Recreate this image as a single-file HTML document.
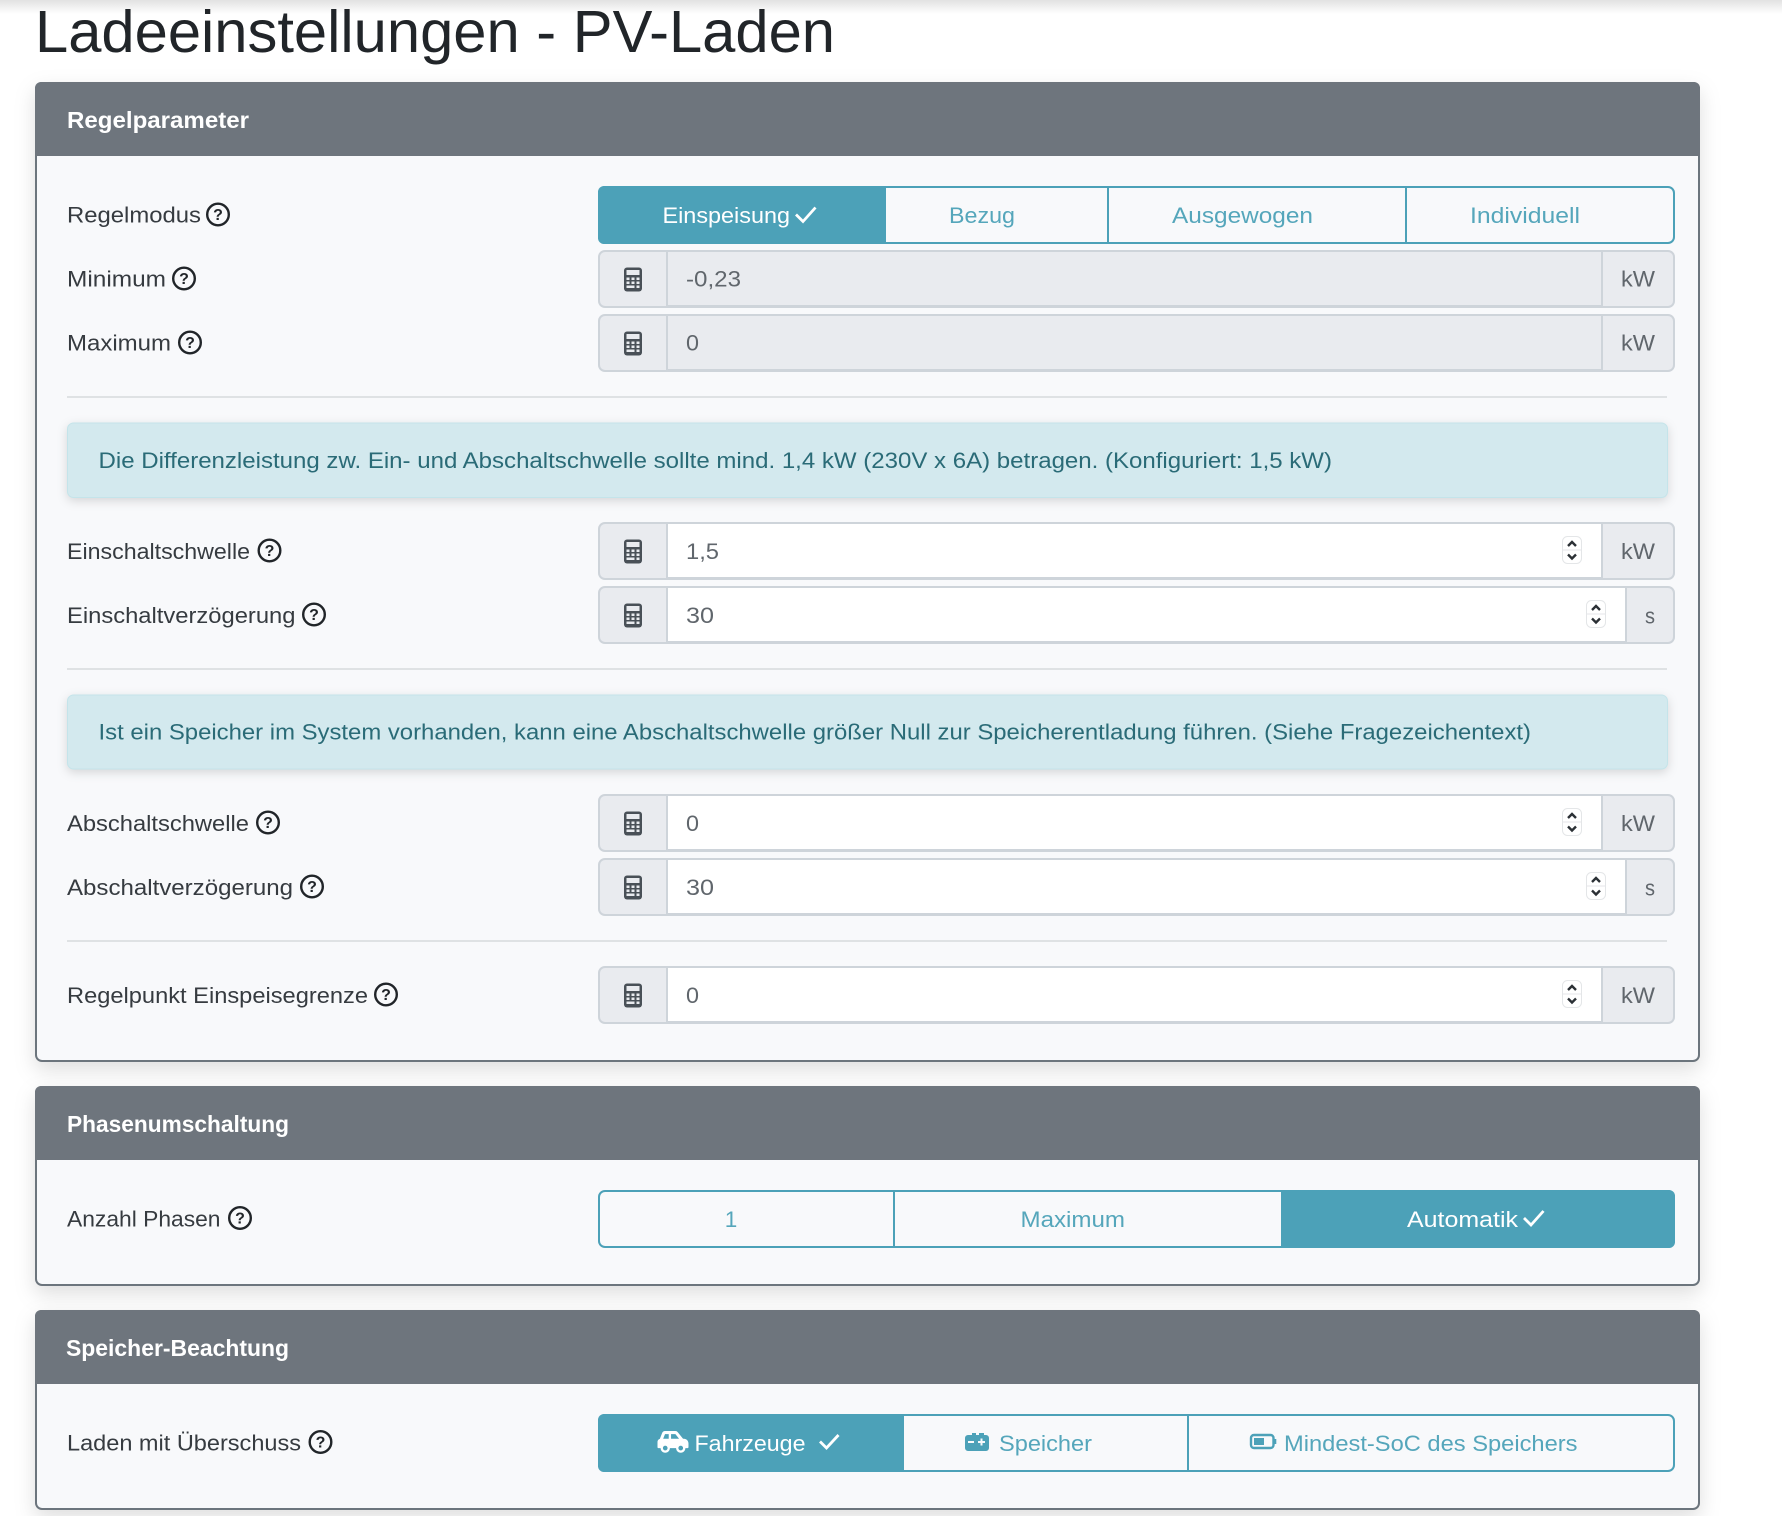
<!DOCTYPE html>
<html lang="de"><head><meta charset="utf-8"><title>Ladeeinstellungen - PV-Laden</title>
<style>
html,body{margin:0;padding:0;background:#fff;width:1782px;height:1516px;overflow:hidden}
svg{display:block}
text{font-family:"Liberation Sans",sans-serif;font-size:22.5px}
.l{fill:#363b40}.v{fill:#60666c}.t{fill:#55a6bb}.w{fill:#fff}
.h{fill:#fff;font-weight:bold;font-size:23px}
.a{fill:#2a6b77}
.q circle{fill:none;stroke:#212529;stroke-width:2.4}
.q text{font-size:16px;font-weight:bold;fill:#212529;text-anchor:middle}
.card{filter:drop-shadow(0 8px 10px rgba(0,0,0,.13))}
.al{filter:drop-shadow(0 3px 5px rgba(0,0,0,.14))}
</style></head><body>
<svg width="1782" height="1516" viewBox="0 0 1782 1516" xmlns="http://www.w3.org/2000/svg">
<defs>
<linearGradient id="top" x1="0" y1="0" x2="0" y2="1"><stop offset="0" stop-color="#e2e2e2"/><stop offset="1" stop-color="#fff"/></linearGradient>
<g id="calc" transform="translate(-.5,-.5)">
<rect x="624.5" y="18" width="18" height="24" rx="3" fill="#495057"/>
<rect x="627" y="20.5" width="13" height="5" fill="#e9ebef"/>
<g fill="#e9ebef"><rect x="627" y="28" width="3" height="2.5"/><rect x="632" y="28" width="3" height="2.5"/><rect x="637" y="28" width="3" height="2.5"/><rect x="627" y="32" width="3" height="2.5"/><rect x="632" y="32" width="3" height="2.5"/><rect x="637" y="32" width="3" height="2.5"/><rect x="627" y="36" width="8" height="2.5"/><rect x="637" y="36" width="3" height="2.5"/></g>
</g>
<g id="spin">
<rect x="0" y="0" width="19" height="27" rx="5" fill="#fff" stroke="#e4e6e8"/>
<line x1="0" y1="13.5" x2="19" y2="13.5" stroke="#e4e6e8"/>
<path d="M5.5 9.5 9.5 5.5 13.5 9.5M5.500 18 9.500 22 13.500 18" fill="none" stroke="#2b3035" stroke-width="2.400"/>
</g>
</defs>
<rect width="1782" height="14" fill="url(#top)"/>
<text x="35" y="52" style="font-size:59.5px" fill="#212529" textLength="800" lengthAdjust="spacingAndGlyphs">Ladeeinstellungen - PV-Laden</text>

<!-- Card 1 -->
<g class="card"><rect x="36" y="83" width="1663" height="978" rx="6" fill="#f8f9fb" stroke="#6c757d" stroke-width="2"/></g>
<path d="M35 156V88a6 6 0 0 1 6-6H1694a6 6 0 0 1 6 6V156Z" fill="#6e757d"/>
<text class="h" x="67" y="128" textLength="182" lengthAdjust="spacingAndGlyphs">Regelparameter</text>

<!-- Regelmodus -->
<g transform="translate(0,186)">
<text class="l" x="67" y="36.5" textLength="134" lengthAdjust="spacingAndGlyphs">Regelmodus</text>
<g class="q" transform="translate(218,28.5)"><circle r="10.8"/><text y="5.6">?</text></g>
<rect x="599" y="1" width="1075" height="56" rx="6" fill="#f8f9fb" stroke="#4ca1b8" stroke-width="2"/>
<path d="M886 0H604a6 6 0 0 0-6 6V52a6 6 0 0 0 6 6H886Z" fill="#4ca1b8"/>
<path d="M1108 0V58M1406 0V58" stroke="#4ca1b8" stroke-width="2"/>
<text class="w" x="662.5" y="37" textLength="127.5" lengthAdjust="spacingAndGlyphs">Einspeisung</text>
<path d="M796 28.5 803 35.5 815.5 21.5" fill="none" stroke="#fff" stroke-width="2.8"/>
<text class="t" x="949" y="37" textLength="66" lengthAdjust="spacingAndGlyphs">Bezug</text>
<text class="t" x="1172" y="37" textLength="141" lengthAdjust="spacingAndGlyphs">Ausgewogen</text>
<text class="t" x="1470" y="37" textLength="110" lengthAdjust="spacingAndGlyphs">Individuell</text>
</g>

<!-- Minimum -->
<g transform="translate(0,250)">
<text class="l" x="67" y="36.5" textLength="99" lengthAdjust="spacingAndGlyphs">Minimum</text>
<g class="q" transform="translate(184,28.5)"><circle r="10.8"/><text y="5.6">?</text></g>
<rect x="599" y="1" width="1075" height="56" rx="6" fill="#e9ebef" stroke="#ced4da" stroke-width="2"/>
<rect x="667" y="1" width="935" height="55" fill="#e9ebef" stroke="#ced4da" stroke-width="2"/>
<use href="#calc"/>
<text class="v" x="686" y="36.5" textLength="55" lengthAdjust="spacingAndGlyphs">-0,23</text>
<text class="v" x="1621" y="36.5" textLength="34" lengthAdjust="spacingAndGlyphs">kW</text>
</g>

<!-- Maximum -->
<g transform="translate(0,314)">
<text class="l" x="67" y="36.5" textLength="104" lengthAdjust="spacingAndGlyphs">Maximum</text>
<g class="q" transform="translate(190,28.5)"><circle r="10.8"/><text y="5.6">?</text></g>
<rect x="599" y="1" width="1075" height="56" rx="6" fill="#e9ebef" stroke="#ced4da" stroke-width="2"/>
<rect x="667" y="1" width="935" height="55" fill="#e9ebef" stroke="#ced4da" stroke-width="2"/>
<use href="#calc"/>
<text class="v" x="686" y="36.5" textLength="13" lengthAdjust="spacingAndGlyphs">0</text>
<text class="v" x="1621" y="36.5" textLength="34" lengthAdjust="spacingAndGlyphs">kW</text>
</g>

<rect x="67" y="396" width="1600" height="2" fill="#dfe2e4"/>
<g class="al"><rect x="67.5" y="423" width="1600" height="74.500" rx="6" fill="#d3e9ee" stroke="#c4e4ea"/></g>
<text class="a" x="98.500" y="468" textLength="1233.500" lengthAdjust="spacingAndGlyphs">Die Differenzleistung zw. Ein- und Abschaltschwelle sollte mind. 1,4 kW (230V x 6A) betragen. (Konfiguriert: 1,5 kW)</text>

<!-- Einschaltschwelle -->
<g transform="translate(0,522)">
<text class="l" x="67" y="37" textLength="183" lengthAdjust="spacingAndGlyphs">Einschaltschwelle</text>
<g class="q" transform="translate(269.500,28.500)"><circle r="10.8"/><text y="5.6">?</text></g>
<rect x="599" y="1" width="1075" height="56" rx="6" fill="#e9ebef" stroke="#ced4da" stroke-width="2"/>
<rect x="667" y="1" width="935" height="55" fill="#fff" stroke="#ced4da" stroke-width="2"/>
<use href="#calc"/>
<text class="v" x="686" y="37" textLength="33" lengthAdjust="spacingAndGlyphs">1,5</text>
<use href="#spin" x="1562.500" y="14.500"/>
<text class="v" x="1621" y="37" textLength="34" lengthAdjust="spacingAndGlyphs">kW</text>
</g>

<!-- Einschaltverzögerung -->
<g transform="translate(0,586)">
<text class="l" x="67" y="37" textLength="228.500" lengthAdjust="spacingAndGlyphs">Einschaltverzögerung</text>
<g class="q" transform="translate(314,28.500)"><circle r="10.8"/><text y="5.6">?</text></g>
<rect x="599" y="1" width="1075" height="56" rx="6" fill="#e9ebef" stroke="#ced4da" stroke-width="2"/>
<rect x="667" y="1" width="959" height="55" fill="#fff" stroke="#ced4da" stroke-width="2"/>
<use href="#calc"/>
<text class="v" x="686" y="37" textLength="28" lengthAdjust="spacingAndGlyphs">30</text>
<use href="#spin" x="1586.500" y="14.500"/>
<text class="v" x="1645" y="37.500" textLength="10" lengthAdjust="spacingAndGlyphs">s</text>
</g>

<rect x="67" y="668" width="1600" height="2" fill="#dfe2e4"/>
<g class="al"><rect x="67.5" y="695" width="1600" height="74" rx="6" fill="#d3e9ee" stroke="#c4e4ea"/></g>
<text class="a" x="98.500" y="739.500" textLength="1432.500" lengthAdjust="spacingAndGlyphs">Ist ein Speicher im System vorhanden, kann eine Abschaltschwelle größer Null zur Speicherentladung führen. (Siehe Fragezeichentext)</text>

<!-- Abschaltschwelle -->
<g transform="translate(0,794)">
<text class="l" x="67" y="37" textLength="182" lengthAdjust="spacingAndGlyphs">Abschaltschwelle</text>
<g class="q" transform="translate(268,28.500)"><circle r="10.8"/><text y="5.6">?</text></g>
<rect x="599" y="1" width="1075" height="56" rx="6" fill="#e9ebef" stroke="#ced4da" stroke-width="2"/>
<rect x="667" y="1" width="935" height="55" fill="#fff" stroke="#ced4da" stroke-width="2"/>
<use href="#calc"/>
<text class="v" x="686" y="37" textLength="13" lengthAdjust="spacingAndGlyphs">0</text>
<use href="#spin" x="1562.500" y="14.500"/>
<text class="v" x="1621" y="37" textLength="34" lengthAdjust="spacingAndGlyphs">kW</text>
</g>

<!-- Abschaltverzögerung -->
<g transform="translate(0,858)">
<text class="l" x="67" y="37" textLength="226" lengthAdjust="spacingAndGlyphs">Abschaltverzögerung</text>
<g class="q" transform="translate(312,28.500)"><circle r="10.8"/><text y="5.6">?</text></g>
<rect x="599" y="1" width="1075" height="56" rx="6" fill="#e9ebef" stroke="#ced4da" stroke-width="2"/>
<rect x="667" y="1" width="959" height="55" fill="#fff" stroke="#ced4da" stroke-width="2"/>
<use href="#calc"/>
<text class="v" x="686" y="37" textLength="28" lengthAdjust="spacingAndGlyphs">30</text>
<use href="#spin" x="1586.500" y="14.500"/>
<text class="v" x="1645" y="37.500" textLength="10" lengthAdjust="spacingAndGlyphs">s</text>
</g>

<rect x="67" y="940" width="1600" height="2" fill="#dfe2e4"/>

<!-- Regelpunkt -->
<g transform="translate(0,966)">
<text class="l" x="67" y="37" textLength="301" lengthAdjust="spacingAndGlyphs">Regelpunkt Einspeisegrenze</text>
<g class="q" transform="translate(386,28.500)"><circle r="10.8"/><text y="5.6">?</text></g>
<rect x="599" y="1" width="1075" height="56" rx="6" fill="#e9ebef" stroke="#ced4da" stroke-width="2"/>
<rect x="667" y="1" width="935" height="55" fill="#fff" stroke="#ced4da" stroke-width="2"/>
<use href="#calc"/>
<text class="v" x="686" y="37" textLength="13" lengthAdjust="spacingAndGlyphs">0</text>
<use href="#spin" x="1562.500" y="14.500"/>
<text class="v" x="1621" y="37" textLength="34" lengthAdjust="spacingAndGlyphs">kW</text>
</g>

<!-- Card 2 -->
<g class="card"><rect x="36" y="1087" width="1663" height="198" rx="6" fill="#f8f9fb" stroke="#6c757d" stroke-width="2"/></g>
<path d="M35 1160V1092a6 6 0 0 1 6-6H1694a6 6 0 0 1 6 6V1160Z" fill="#6e757d"/>
<text class="h" x="67" y="1132" textLength="222" lengthAdjust="spacingAndGlyphs">Phasenumschaltung</text>
<g transform="translate(0,1190)">
<text class="l" x="67" y="36.5" textLength="153.5" lengthAdjust="spacingAndGlyphs">Anzahl Phasen</text>
<g class="q" transform="translate(240,28)"><circle r="10.8"/><text y="5.6">?</text></g>
<rect x="599" y="1" width="1075" height="56" rx="6" fill="#f8f9fb" stroke="#4ca1b8" stroke-width="2"/>
<path d="M1281 0H1669a6 6 0 0 1 6 6V52a6 6 0 0 1-6 6H1281Z" fill="#4ca1b8"/>
<path d="M894 0V58" stroke="#4ca1b8" stroke-width="2"/>
<text class="t" x="731" y="37" text-anchor="middle">1</text>
<text class="t" x="1020.5" y="37" textLength="104.5" lengthAdjust="spacingAndGlyphs">Maximum</text>
<text class="w" x="1407" y="37" textLength="111" lengthAdjust="spacingAndGlyphs">Automatik</text>
<path d="M1524 28 1531 35 1543.5 21" fill="none" stroke="#fff" stroke-width="2.8"/>
</g>

<!-- Card 3 -->
<g class="card"><rect x="36" y="1311" width="1663" height="198" rx="6" fill="#f8f9fb" stroke="#6c757d" stroke-width="2"/></g>
<path d="M35 1384V1316a6 6 0 0 1 6-6H1694a6 6 0 0 1 6 6V1384Z" fill="#6e757d"/>
<text class="h" x="66" y="1356" textLength="223" lengthAdjust="spacingAndGlyphs">Speicher-Beachtung</text>
<g transform="translate(0,1414)">
<text class="l" x="67" y="36.5" textLength="234" lengthAdjust="spacingAndGlyphs">Laden mit Überschuss</text>
<g class="q" transform="translate(320.5,28)"><circle r="10.8"/><text y="5.6">?</text></g>
<rect x="599" y="1" width="1075" height="56" rx="6" fill="#f8f9fb" stroke="#4ca1b8" stroke-width="2"/>
<path d="M904 0H604a6 6 0 0 0-6 6V52a6 6 0 0 0 6 6H904Z" fill="#4ca1b8"/>
<path d="M1188 0V58" stroke="#4ca1b8" stroke-width="2"/>
<path transform="translate(657.500,15.500) scale(.0484)" fill="#fff" d="M544 192h-16L419.22 56.02A64.025 64.025 0 0 0 369.24 32H155.33c-26.17 0-49.7 15.93-59.42 40.23L48 194.26C20.44 201.4 0 226.21 0 256v112c0 8.84 7.16 16 16 16h48c0 53.02 42.98 96 96 96s96-42.98 96-96h128c0 53.02 42.98 96 96 96s96-42.98 96-96h48c8.84 0 16-7.16 16-16v-80c0-53.02-42.98-96-96-96zM160 432c-26.47 0-48-21.53-48-48s21.53-48 48-48 48 21.53 48 48-21.53 48-48 48zm72-240H116.93l38.4-96H232v96zm48 0V96h89.24l76.8 96H280zm200 240c-26.47 0-48-21.53-48-48s21.53-48 48-48 48 21.53 48 48-21.53 48-48 48z"/>
<text class="w" x="694.500" y="37" textLength="111" lengthAdjust="spacingAndGlyphs">Fahrzeuge</text>
<path d="M820 27.5 826.5 34 838.5 21" fill="none" stroke="#fff" stroke-width="2.8"/>
<path transform="translate(-1,0)" fill="#4ca1b8" fill-rule="evenodd" d="M968 21h5v-2h4v2h-4 0h5v0h0v0h2v-2h5v2h2a3 3 0 0 1 3 3v10a3 3 0 0 1-3 3h-18a3 3 0 0 1-3-3V24a3 3 0 0 1 3-3ZM969 27v2h6v-2ZM979 27v2h2.5v2.5h2V29h2.500v-2h-2.500v-2.500h-2V27Z"/>
<text class="t" x="999" y="37" textLength="93" lengthAdjust="spacingAndGlyphs">Speicher</text>
<rect x="1251" y="21" width="22.500" height="13" rx="3" fill="none" stroke="#4ca1b8" stroke-width="2.400"/>
<rect x="1254" y="24" width="10" height="7" fill="#4ca1b8"/>
<rect x="1274.500" y="25" width="1.800" height="5" fill="#4ca1b8"/>
<text class="t" x="1284" y="37" textLength="293.500" lengthAdjust="spacingAndGlyphs">Mindest-SoC des Speichers</text>
</g>
</svg>
</body></html>
